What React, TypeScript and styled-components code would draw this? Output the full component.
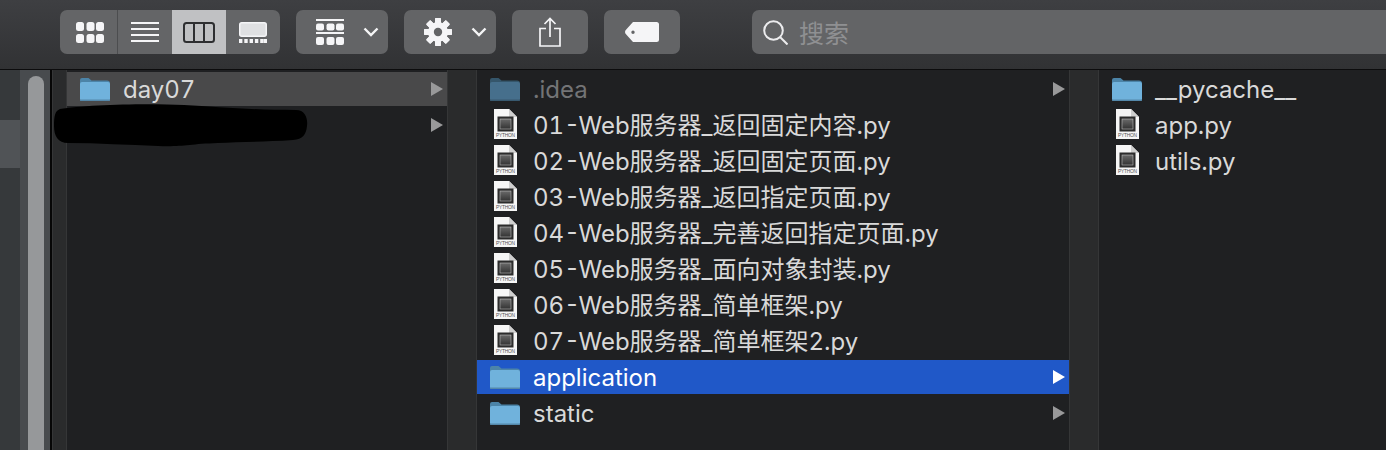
import React from "react";
import styled, { createGlobalStyle } from "styled-components";

const GlobalStyle = createGlobalStyle`
  html, body {
    margin: 0;
    padding: 0;
    height: 450px;
    overflow: hidden;
    background: #1f2022;
    font-family: Inter, "Noto Sans CJK SC", sans-serif;
  }
`;

const Window = styled.div`
  position: relative;
  width: 1386px;
  height: 450px;
  display: flex;
  flex-direction: column;
  overflow: hidden;
`;

const Toolbar = styled.div`
  height: 70px;
  flex: none;
  display: flex;
  align-items: flex-start;
  padding: 10px 0 0 60px;
  box-sizing: border-box;
  gap: 16px;
  background: linear-gradient(#3e3f42, #313234);
  border-bottom: 1px solid #0c0c0d;
`;

const Segmented = styled.div`
  display: flex;
  width: 220px;
  height: 44px;
  border-radius: 7px;
  overflow: hidden;
  background: #646567;
`;

const Segment = styled.div<{ $w: number; $active?: boolean; $first?: boolean }>`
  width: ${(p) => p.$w}px;
  height: 100%;
  flex: none;
  display: flex;
  align-items: center;
  justify-content: center;
  box-sizing: border-box;
  padding-left: ${(p) => (p.$first ? "3px" : "0")};
  background: ${(p) => (p.$active ? "#c0c1c3" : "transparent")};
  border-right: ${(p) => (p.$first ? "1px solid #4c4d4f" : "none")};
`;

const ToolButton = styled.div<{ $w: number }>`
  width: ${(p) => p.$w}px;
  height: 44px;
  flex: none;
  border-radius: 7px;
  background: #636466;
  display: flex;
  align-items: center;
  justify-content: center;
`;

const MenuButton = styled(ToolButton)`
  justify-content: flex-start;
  box-sizing: border-box;
  padding-left: 20px;
  gap: 19px;
`;

const SearchBox = styled.div`
  flex: 1;
  height: 44px;
  margin-left: 56px;
  border-radius: 7px 0 0 7px;
  background: #636466;
  display: flex;
  align-items: center;
  padding-left: 11px;
  gap: 11px;
`;

const SearchHint = styled.span`
  font-size: 25px;
  color: #8f9092;
  font-family: "Noto Sans CJK SC", sans-serif;
`;

const Browser = styled.div`
  flex: 1;
  display: flex;
  min-height: 0;
  background: #1f2022;
`;

const Sidebar = styled.div`
  width: 20px;
  flex: none;
  padding-top: 50px;
  background: #36393b;
`;

const SidebarSelection = styled.div`
  height: 48px;
  background: #505356;
`;

const Track = styled.div`
  width: 32px;
  flex: none;
  box-sizing: border-box;
  padding: 6px 6px 0 8px;
  background: #484b4e;
  border-right: 2px solid #060606;
`;

const Thumb = styled.div`
  height: 420px;
  border-radius: 8px 8px 0 0;
  background: #96989a;
`;

const Gutter = styled.div<{ $w: number }>`
  width: ${(p) => p.$w}px;
  flex: none;
  box-sizing: border-box;
  background: #2a2b2c;
  border-left: 1px solid #353637;
  border-right: 1px solid #353637;
`;

const Column = styled.div<{ $w?: number }>`
  width: ${(p) => (p.$w ? `${p.$w}px` : "auto")};
  flex: ${(p) => (p.$w ? "none" : "1")};
  display: flex;
  flex-direction: column;
  gap: 2px;
  padding-top: 2px;
`;

const Row = styled.div<{ $state?: "active" | "hover" }>`
  height: 34px;
  flex: none;
  display: flex;
  align-items: center;
  background: ${(p) =>
    p.$state === "active" ? "#2058c8" : p.$state === "hover" ? "#49494a" : "transparent"};
`;

const IconSlot = styled.div`
  width: 30px;
  margin: 0 13px;
  flex: none;
  display: flex;
  justify-content: center;
`;

const Label = styled.span<{ $muted?: boolean; $active?: boolean }>`
  flex: 1;
  font-size: 24px;
  line-height: 30px;
  padding-top: 2px;
  font-variant-numeric: tabular-nums;
  white-space: nowrap;
  color: ${(p) => (p.$active ? "#ffffff" : p.$muted ? "#737476" : "#d9d9d9")};
`;

const Arrow = styled.div<{ $bright?: boolean }>`
  width: 0;
  height: 0;
  flex: none;
  margin-right: 4px;
  border-left: 12px solid ${(p) => (p.$bright ? "#ffffff" : "#99999a")};
  border-top: 7px solid transparent;
  border-bottom: 7px solid transparent;
`;

const Scribble = styled.svg`
  position: absolute;
  left: 54px;
  top: 102px;
`;

const Chevron = () => (
  <svg width="16" height="10" viewBox="0 0 16 10" fill="none" stroke="#f5f5f6" strokeWidth="2.4">
    <path d="M1.5 1.5 8 8l6.5-6.5" />
  </svg>
);

const IconGrid = () => (
  <svg width="28" height="21" viewBox="0 0 28 21" fill="#f5f5f7">
    {[0, 10.5, 20].map((x) =>
      [0, 12].map((y) => <rect key={`${x}-${y}`} x={x} y={y} width="8" height="9" rx="2.5" />)
    )}
  </svg>
);

const IconList = () => (
  <svg width="28" height="21" viewBox="0 0 28 21" fill="#f5f5f7">
    {[0, 6, 12, 18].map((y) => (
      <rect key={y} y={y} width="28" height="2" />
    ))}
  </svg>
);

const IconColumns = () => (
  <svg width="32" height="21" viewBox="0 0 32 21" fill="none" stroke="#2e2f31" strokeWidth="2">
    <rect x="1" y="1" width="30" height="19" rx="2.5" />
    <path d="M11 1v19M21 1v19" />
  </svg>
);

const IconGallery = () => (
  <svg width="28" height="21" viewBox="0 0 28 21" fill="#f5f5f7">
    <rect x="0.75" y="0.75" width="26.5" height="13.5" rx="2" fill="#dfe0e2" stroke="#f5f5f7" strokeWidth="1.5" />
    {[0, 5.3, 10.6, 15.9, 21.2, 24.6].map((x) => (
      <rect key={x} x={x} y="17" width="3.4" height="4" />
    ))}
  </svg>
);

const IconGroup = () => (
  <svg width="28" height="26" viewBox="0 0 28 26" fill="#f5f5f7">
    <rect width="28" height="2" />
    <rect y="13" width="28" height="2" />
    {[0, 10.5, 20].map((x) => (
      <React.Fragment key={x}>
        <rect x={x} y="4.5" width="8" height="7" rx="2" />
        <rect x={x} y="18" width="8" height="8" rx="2" />
      </React.Fragment>
    ))}
  </svg>
);

const gearTeeth = [0, 45, 90, 135, 180, 225, 270, 315];

const IconGear = () => (
  <svg width="28" height="28" viewBox="0 0 28 28">
    {gearTeeth.map((a) => (
      <rect key={a} x="11" y="0" width="6" height="28" rx="1" fill="#f5f5f7" transform={`rotate(${a} 14 14)`} />
    ))}
    <circle cx="14" cy="14" r="10" fill="#f5f5f7" />
    <circle cx="14" cy="14" r="4.2" fill="#636466" />
  </svg>
);

const IconShare = () => (
  <svg width="22" height="30" viewBox="0 0 22 30" fill="none" stroke="#f5f5f7" strokeWidth="1.7">
    <path d="M7 11.5H1v17.5h20V11.5h-6" />
    <path d="M11 20V1.5M5.5 7 11 1.5 16.5 7" />
  </svg>
);

const IconTag = () => (
  <svg width="34" height="20" viewBox="0 0 34 20">
    <path
      fill="#f5f5f7"
      fillRule="evenodd"
      d="M8 0h23.5A2.5 2.5 0 0 1 34 2.5v15a2.5 2.5 0 0 1-2.5 2.5H8L1 12.2c-1.3-1.3-1.3-3.1 0-4.4L8 0zm0 8.5a1.7 1.7 0 1 0 0 3.4 1.7 1.700 0 0 0 0-3.4z"
    />
  </svg>
);

const IconSearch = () => (
  <svg width="25" height="25" viewBox="0 0 25 25" fill="none" stroke="#ececee" strokeWidth="2">
    <circle cx="10.500" cy="10.500" r="9.300" />
    <path d="M17 17 24.500 24.500" />
  </svg>
);

const FolderIcon: React.FC<{ dim?: boolean }> = ({ dim }) => (
  <svg width="30" height="24" viewBox="0 0 30 24">
    <path d="M0 3a2 2 0 0 1 2-2h6.500l3 2.500H27A3 3 0 0 1 30 6.500V12H0z" fill={dim ? "#35566b" : "#4c84a8"} />
    <rect y="5" width="30" height="19" rx="2" fill={dim ? "#466f8c" : "#70b2dc"} />
    <rect y="22.500" width="30" height="1.500" rx="0.700" fill={dim ? "#38596f" : "#5488aa"} />
  </svg>
);

const PythonIcon = () => (
  <svg width="23" height="30" viewBox="0 0 23 30" style={{ marginTop: -3 }}>
    <defs>
      <linearGradient id="pyScreen" x1="0" y1="0" x2="0" y2="1">
        <stop offset="0" stopColor="#6a6a6a" />
        <stop offset="1" stopColor="#333333" />
      </linearGradient>
    </defs>
    <path d="M0 0h15l8 8v22H0z" fill="#f6f6f6" />
    <path d="M15 0l8 8h-8z" fill="#cfcfcf" />
    <rect x="3.500" y="7.500" width="16" height="15" fill="#2c2c2c" />
    <rect x="6" y="10" width="11" height="10" fill="url(#pyScreen)" stroke="#bdbdbd" strokeWidth="0.600" />
    <text x="11.500" y="28" textAnchor="middle" fontSize="4.800" fontFamily="Liberation Sans, sans-serif" fill="#555" textLength="19">
      PYTHON
    </text>
  </svg>
);

type Entry = {
  name: string;
  kind: "folder" | "python";
  muted?: boolean;
  state?: "active" | "hover";
};

const middleEntries: Entry[] = [
  { name: ".idea", kind: "folder", muted: true },
  { name: "01-Web服务器_返回固定内容.py", kind: "python" },
  { name: "02-Web服务器_返回固定页面.py", kind: "python" },
  { name: "03-Web服务器_返回指定页面.py", kind: "python" },
  { name: "04-Web服务器_完善返回指定页面.py", kind: "python" },
  { name: "05-Web服务器_面向对象封装.py", kind: "python" },
  { name: "06-Web服务器_简单框架.py", kind: "python" },
  { name: "07-Web服务器_简单框架2.py", kind: "python" },
  { name: "application", kind: "folder", state: "active" },
  { name: "static", kind: "folder" },
];

const rightEntries: Entry[] = [
  { name: "__pycache__", kind: "folder" },
  { name: "app.py", kind: "python" },
  { name: "utils.py", kind: "python" },
];

const FileRow: React.FC<{ entry: Entry; noArrow?: boolean }> = ({ entry, noArrow }) => (
  <Row $state={entry.state}>
    <IconSlot>
      {entry.kind === "folder" ? <FolderIcon dim={entry.muted} /> : <PythonIcon />}
    </IconSlot>
    <Label $muted={entry.muted} $active={entry.state === "active"}>
      {entry.name}
    </Label>
    {entry.kind === "folder" && !noArrow && <Arrow $bright={entry.state === "active"} />}
  </Row>
);

const App: React.FC = () => {
  return (
    <Window>
      <GlobalStyle />
      <Toolbar>
        <Segmented>
          <Segment $w={58} $first>
            <IconGrid />
          </Segment>
          <Segment $w={54}>
            <IconList />
          </Segment>
          <Segment $w={54} $active>
            <IconColumns />
          </Segment>
          <Segment $w={54}>
            <IconGallery />
          </Segment>
        </Segmented>
        <MenuButton $w={92}>
          <IconGroup />
          <Chevron />
        </MenuButton>
        <MenuButton $w={92}>
          <IconGear />
          <Chevron />
        </MenuButton>
        <ToolButton $w={76}>
          <IconShare />
        </ToolButton>
        <ToolButton $w={76}>
          <IconTag />
        </ToolButton>
        <SearchBox>
          <IconSearch />
          <SearchHint>搜索</SearchHint>
        </SearchBox>
      </Toolbar>
      <Browser>
        <Sidebar>
          <SidebarSelection />
        </Sidebar>
        <Track>
          <Thumb />
        </Track>
        <Gutter $w={15} />
        <Column $w={380}>
          <Row $state="hover">
            <IconSlot>
              <FolderIcon />
            </IconSlot>
            <Label>day07</Label>
            <Arrow />
          </Row>
          <Row>
            <Label />
            <Arrow />
          </Row>
        </Column>
        <Gutter $w={30} />
        <Column $w={592}>
          {middleEntries.map((entry) => (
            <FileRow key={entry.name} entry={entry} />
          ))}
        </Column>
        <Gutter $w={30} />
        <Column>
          {rightEntries.map((entry) => (
            <FileRow key={entry.name} entry={entry} noArrow />
          ))}
        </Column>
      </Browser>
      <Scribble width="254" height="45" viewBox="0 0 254 45">
        <path
          d="M6 7C30 3 90 1 130 3c35 2 70 5 112 5 9 0 12 8 11 16-1 9-4 13-14 14-30 2-55 2-75 3-30 1-35 4-60 3-30-1-60-3-90-3C4 41 0 34 0 24 0 14 1 9 6 7z"
          fill="#000"
        />
      </Scribble>
    </Window>
  );
};

export default App;
